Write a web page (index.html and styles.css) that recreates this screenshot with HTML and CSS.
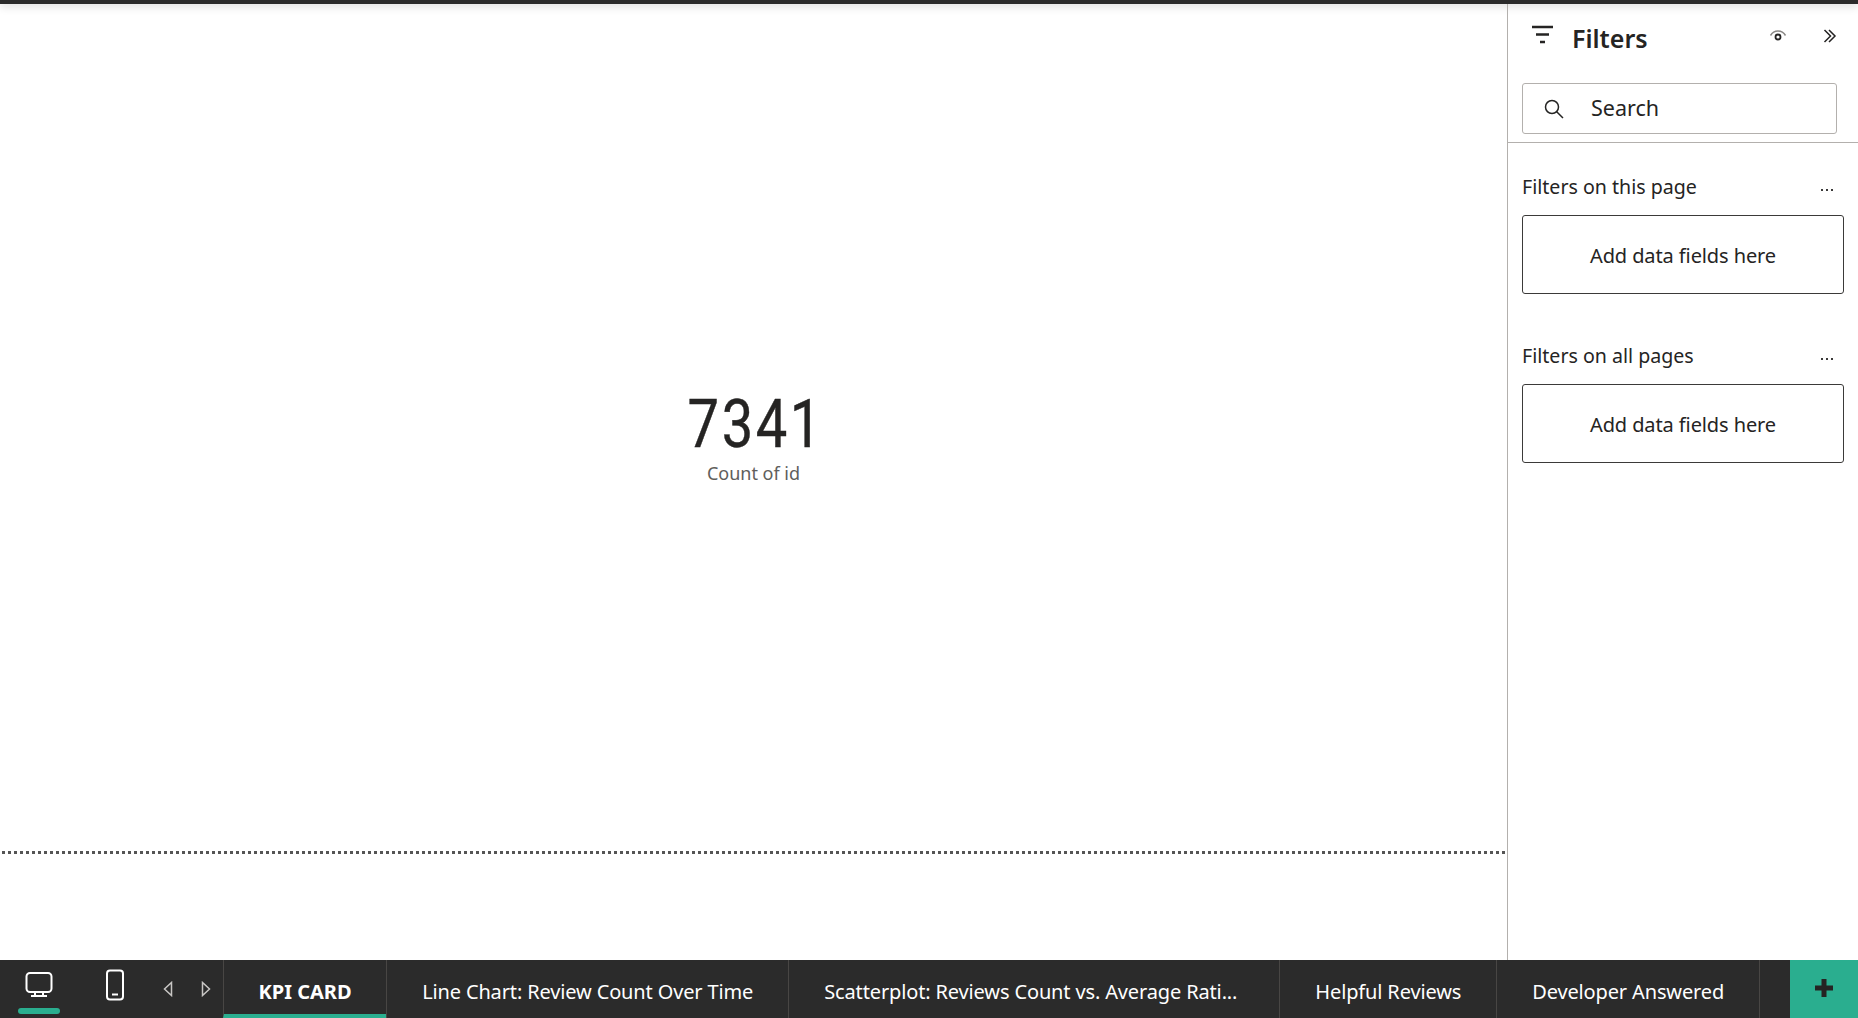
FILE: index.html
```html
<!DOCTYPE html>
<html lang="en">
<head>
    <meta charset="UTF-8">
    <title>KPI CARD</title>
    <link rel="stylesheet" href="styles.css">
</head>
<body>
    <div class="top-strip"></div>
    <div class="workspace">
        <div class="canvas">
            <div class="report-page">
                <div class="kpi-card">
                    <div class="kpi-value">7341</div>
                    <div class="kpi-label">Count of id</div>
                </div>
            </div>
            <div class="page-end"></div>
        </div>
        <div class="filters">
            <div class="filters-head">
                <svg class="icon-filter" width="24" height="20" viewBox="0 0 24 20"><path d="M1 2h21M5 9.500h13M9 17h5" fill="none" stroke="#252423" stroke-width="2.400"/></svg>
                <span class="filters-title">Filters</span>
                <svg class="icon-eye" width="18" height="14" viewBox="0 0 18 14"><path d="M1.500 6.500C5 .500 13 .500 16.500 6.500" fill="none" stroke="#8a8886" stroke-width="1.500"/><circle cx="9" cy="8" r="2.500" fill="none" stroke="#252423" stroke-width="1.800"/></svg>
                <svg class="icon-collapse" width="14" height="14" viewBox="0 0 14 14"><path d="M1.500 1l6 6-6 6M6 1l6 6-6 6" fill="none" stroke="#252423" stroke-width="1.500"/></svg>
            </div>
            <div class="search-box">
                <svg width="22" height="22" viewBox="0 0 22 22"><circle cx="9" cy="9" r="6.500" fill="none" stroke="#252423" stroke-width="1.500"/><path d="M13.500 13.500l6.500 6.500" stroke="#252423" stroke-width="1.500"/></svg>
                <span>Search</span>
            </div>
            <div class="filters-body">
                <div class="filter-section">
                    <div class="section-head">
                        <span>Filters on this page</span>
                        <span class="more"><i></i><i></i><i></i></span>
                    </div>
                    <div class="drop-box">Add data fields here</div>
                </div>
                <div class="filter-section">
                    <div class="section-head">
                        <span>Filters on all pages</span>
                        <span class="more"><i></i><i></i><i></i></span>
                    </div>
                    <div class="drop-box">Add data fields here</div>
                </div>
            </div>
        </div>
    </div>
    <div class="tabbar">
        <div class="layout-btn active">
            <svg width="30" height="30" viewBox="0 0 30 30"><rect x="2.500" y="3" width="25" height="19" rx="3.500" fill="none" stroke="#fff" stroke-width="2"/><path d="M11 22v3M19 22v3M7 26h16" fill="none" stroke="#fff" stroke-width="2"/></svg>
        </div>
        <div class="layout-btn">
            <svg width="20" height="32" viewBox="0 0 20 32"><rect x="2" y="1.500" width="16" height="29" rx="3" fill="none" stroke="#fff" stroke-width="2"/><path d="M7 25.500h6" stroke="#fff" stroke-width="2"/></svg>
        </div>
        <div class="pager">
            <svg width="10" height="16" viewBox="0 0 10 16"><path d="M8.500 1.500v13L1.500 8z" fill="none" stroke="#c8c6c4" stroke-width="1.500"/></svg>
            <svg width="10" height="16" viewBox="0 0 10 16"><path d="M1.500 1.500v13L8.500 8z" fill="none" stroke="#c8c6c4" stroke-width="1.500"/></svg>
        </div>
        <div class="tab current">KPI CARD</div>
        <div class="tab">Line Chart: Review Count Over Time</div>
        <div class="tab clipped">Scatterplot: Reviews Count vs. Average Rati...</div>
        <div class="tab">Helpful Reviews</div>
        <div class="tab">Developer Answered</div>
        <div class="tab-fill"></div>
        <div class="add-page">
            <svg width="20" height="20" viewBox="0 0 20 20"><path d="M10 1v18M1 10h18" stroke="#252423" stroke-width="5"/></svg>
        </div>
    </div>
</body>
</html>
```

FILE: styles.css
```css
html, body {
    height: 100%;
}
body {
    margin: 0;
    display: flex;
    flex-direction: column;
    overflow: hidden;
    font-family: "Noto Sans", "Open Sans", sans-serif;
    color: #252423;
    background: white;
}
.top-strip {
    height: 4px;
    background: #2b2b2b;
    box-shadow: 0 1px 10px rgba(0,0,0,0.25);
    flex-shrink: 0;
}
.workspace {
    flex: 1;
    display: flex;
    min-height: 0;
}
.canvas {
    flex: 1;
    display: flex;
    flex-direction: column;
}
.report-page {
    height: 847px;
    display: flex;
    align-items: center;
    justify-content: center;
}
.kpi-card {
    text-align: center;
    margin-top: 16px;
}
.kpi-value {
    font-family: Roboto, sans-serif;
    font-size: 66px;
    line-height: 74px;
    letter-spacing: 3px;
    color: #252423;
    -webkit-text-stroke: 0.4px #252423;
    transform: scaleX(0.85) translate(3px, 1px);
}
.kpi-label {
    font-size: 18px;
    line-height: 24px;
    color: #605e5c;
}
.page-end {
    height: 3px;
    margin: 0 2px;
    background: repeating-linear-gradient(to right, #555 0, #555 3px, transparent 3px, transparent 6px);
}
.filters {
    width: 350px;
    border-left: 1px solid #b3b0ad;
    display: flex;
    flex-direction: column;
}
.filters-head {
    height: 79px;
    display: flex;
    align-items: center;
    padding: 0 21px 12px 23px;
    box-sizing: border-box;
}
.icon-filter {
    margin-right: 17px;
    margin-top: -5px;
}
.filters-title {
    flex: 1;
    font-size: 25px;
    font-weight: 600;
}
.icon-eye {
    margin-right: 36px;
    margin-top: -4px;
}
.icon-collapse {
    margin-top: -4px;
}
.search-box {
    margin: 0 21px 0 14px;
    height: 51px;
    box-sizing: border-box;
    border: 1px solid #b3b0ad;
    border-radius: 3px;
    display: flex;
    align-items: center;
    padding-left: 20px;
    gap: 26px;
    font-size: 21.500px;
}
.search-box span {
    margin-top: -2px;
}
.filters-body {
    margin-top: 8px;
    border-top: 1px solid #b3b0ad;
    padding: 29px 14px 0;
}
.filter-section {
    margin-bottom: 47px;
}
.section-head {
    display: flex;
    justify-content: space-between;
    align-items: center;
    font-size: 19.600px;
    line-height: 30px;
    padding-right: 11px;
    margin-bottom: 13px;
}
.more {
    display: flex;
    gap: 3px;
    padding-top: 6px;
}
.more i {
    width: 2px;
    height: 2px;
    background: #3b3a39;
}
.drop-box {
    height: 79px;
    box-sizing: border-box;
    border: 1px solid #3b3a39;
    border-radius: 3px;
    display: flex;
    align-items: center;
    justify-content: center;
    font-size: 20px;
    letter-spacing: -0.1px;
    padding-top: 2px;
}
.tabbar {
    height: 58px;
    flex-shrink: 0;
    display: flex;
    background: #2b2b2b;
    color: white;
}
.layout-btn {
    width: 76px;
    display: flex;
    justify-content: center;
    padding: 9px 0 0 2px;
    box-sizing: border-box;
    position: relative;
}
.layout-btn svg {
    height: 32px;
}
.layout-btn.active::after {
    content: "";
    position: absolute;
    left: 18px;
    bottom: 4px;
    width: 42px;
    height: 6px;
    border-radius: 3px;
    background: #2aae8f;
}
.pager {
    width: 71px;
    display: flex;
    align-items: center;
    justify-content: space-between;
    padding: 0 12px 0 11px;
    box-sizing: border-box;
}
.tab {
    display: flex;
    align-items: center;
    padding: 4px 35px 0;
    border-left: 1px solid #484644;
    font-size: 20px;
    letter-spacing: -0.14px;
    white-space: nowrap;
    box-sizing: border-box;
}
.tab.clipped {
    padding-right: 42px;
}
.tab.current {
    font-weight: 700;
    border-bottom: 4px solid #2aae8f;
    padding: 8px 34.500px 0;
    letter-spacing: 0;
}
.tab-fill {
    flex: 1;
    border-left: 1px solid #484644;
}
.add-page {
    width: 68px;
    background: #2aae8f;
    display: flex;
    align-items: center;
    justify-content: center;
    padding-bottom: 3px;
    box-sizing: border-box;
}
```
